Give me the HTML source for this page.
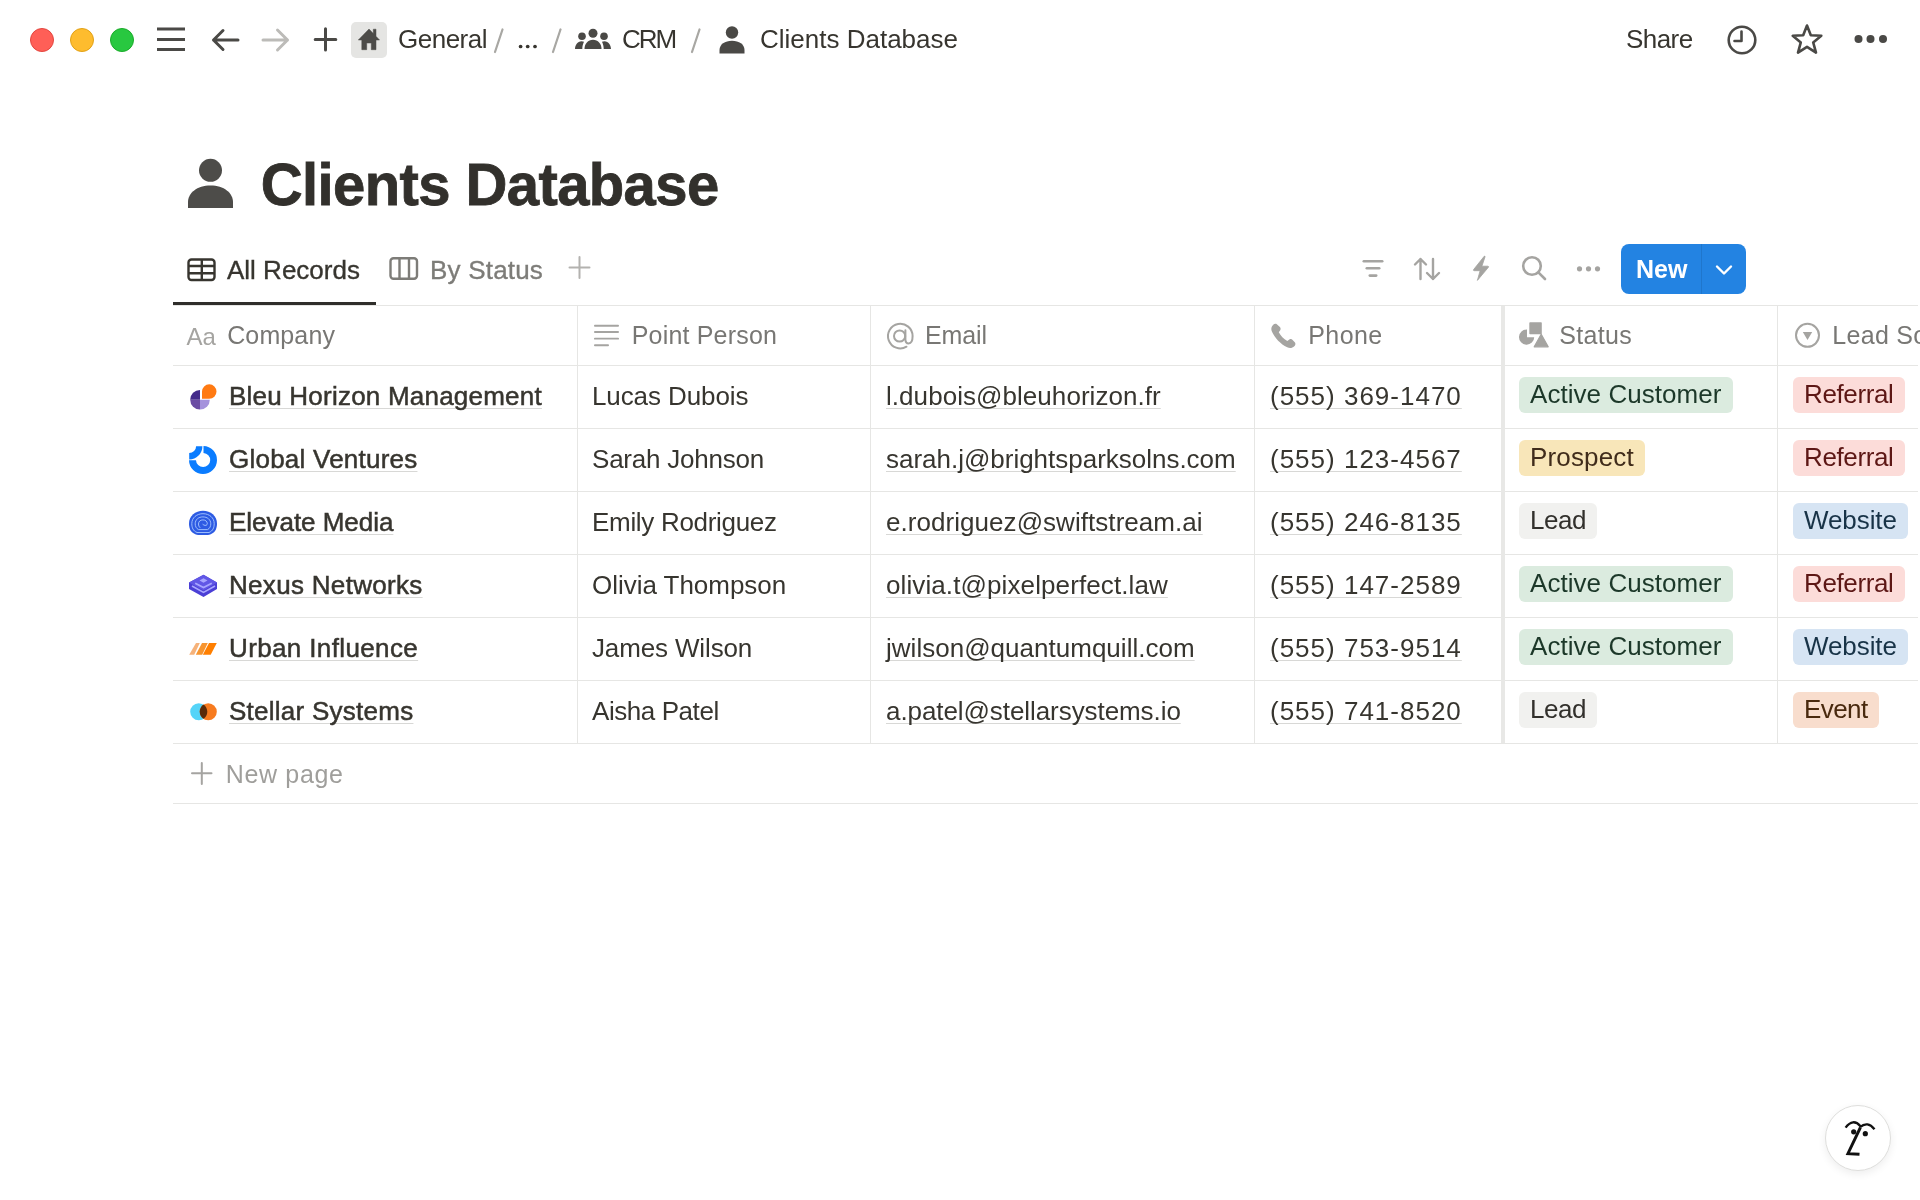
<!DOCTYPE html>
<html><head><meta charset="utf-8">
<style>
*{margin:0;padding:0;box-sizing:border-box}
html,body{width:1920px;height:1200px;overflow:hidden;background:#fff}
body{position:relative;font-family:"Liberation Sans",sans-serif;color:#37352f}
#root{position:absolute;left:0;top:0;width:1920px;height:1200px;will-change:transform}
.a{position:absolute}
.t{position:absolute;white-space:nowrap;line-height:30px;height:30px}
.f26{font-size:26px}
.f25{font-size:25px}
.hl{position:absolute;height:1px;background:#e6e6e4}
.vl{position:absolute;width:1px;background:#e6e6e4}
.hd{color:#787774}
.ul{text-decoration:underline;text-decoration-color:#d8d8d6;text-decoration-thickness:1px;text-underline-offset:3px;text-decoration-skip-ink:none}
.pill{position:absolute;height:35.7px;border-radius:6px;font-size:26px;line-height:35px;padding:0 11px;white-space:nowrap}
svg{position:absolute;overflow:visible}
</style></head><body><div id="root">

<!-- ===== TOP BAR ===== -->
<div class="a" style="left:30px;top:28px;width:24px;height:24px;border-radius:50%;background:#ff5f57;border:0.5px solid #e2463f"></div>
<div class="a" style="left:70px;top:28px;width:24px;height:24px;border-radius:50%;background:#febc2e;border:0.5px solid #e1a116"></div>
<div class="a" style="left:110px;top:28px;width:24px;height:24px;border-radius:50%;background:#28c840;border:0.5px solid #1aab29"></div>

<!-- hamburger -->
<svg style="left:157px;top:27px" width="28" height="25"><g fill="#4a4946"><rect x="0" y="0.5" width="28" height="3"/><rect x="0" y="11" width="28" height="3"/><rect x="0" y="21" width="28" height="3"/></g></svg>
<!-- back arrow -->
<svg style="left:210px;top:27px" width="32" height="26"><g fill="none" stroke="#4a4946" stroke-width="3" stroke-linecap="round" stroke-linejoin="round"><path d="M3.5 13H28M13 3.5L3.5 13L13 22.5"/></g></svg>
<!-- forward arrow -->
<svg style="left:260px;top:27px" width="32" height="26"><g fill="none" stroke="#bcbbb8" stroke-width="3" stroke-linecap="round" stroke-linejoin="round"><path d="M3 13H27.5M17.5 3L27.5 13L17.5 23"/></g></svg>
<!-- plus -->
<svg style="left:313px;top:27px" width="26" height="26"><g fill="none" stroke="#4a4946" stroke-width="3" stroke-linecap="round"><path d="M2.2 12.5H22.8M12.5 1.8V23"/></g></svg>
<!-- home -->
<div class="a" style="left:351px;top:22px;width:36px;height:36px;border-radius:5px;background:#e5e5e3"></div>
<svg style="left:357px;top:28px" width="24" height="24" viewBox="0 0 24 24"><path fill="#4d4c49" stroke="#4d4c49" stroke-width="0.5" stroke-linejoin="round" d="M12 1L16.3 5.5V1.2H19V8.3L22.5 12H19V21.7H14.3V15H9.7V21.7H4.8V12H1.3Z"/></svg>
<div class="t f26" style="left:398px;top:24px;letter-spacing:-0.5px">General</div>
<svg style="left:490px;top:26px" width="16" height="30"><path d="M12.5 3.5L5 26" stroke="#a8a7a3" stroke-width="2.2" stroke-linecap="round"/></svg>
<svg style="left:515px;top:40px" width="26" height="12"><g fill="#37352f"><circle cx="5.6" cy="6.5" r="1.85"/><circle cx="12.7" cy="6.5" r="1.85"/><circle cx="20" cy="6.5" r="1.85"/></g></svg>
<svg style="left:548px;top:26px" width="16" height="30"><path d="M12.5 3.5L5 26" stroke="#a8a7a3" stroke-width="2.2" stroke-linecap="round"/></svg>
<!-- group icon -->
<svg style="left:575px;top:28px" width="36" height="22" viewBox="0 0 36 22"><g fill="#4a4946"><circle cx="18" cy="5.2" r="4.5"/><circle cx="7" cy="8.2" r="3.8"/><circle cx="29" cy="8.2" r="3.8"/><path d="M9.5 21C9.5 15.8 13 11.8 18 11.8S26.5 15.8 26.5 21Z"/><path d="M0 21C0 17.3 2.5 13.2 6.5 13.2C7.5 13.2 8.3 13.4 9 13.7C7.9 15.8 7.3 18.3 7.3 21Z"/><path d="M36 21C36 17.3 33.5 13.2 29.5 13.2C28.5 13.2 27.7 13.4 27 13.7C28.1 15.8 28.7 18.3 28.7 21Z"/></g></svg>
<div class="t f26" style="left:622px;top:24px;letter-spacing:-2px">CRM</div>
<svg style="left:687px;top:26px" width="16" height="30"><path d="M12.5 3.5L5 26" stroke="#a8a7a3" stroke-width="2.2" stroke-linecap="round"/></svg>
<!-- person small -->
<svg style="left:719px;top:26px" width="26" height="28" viewBox="0 0 26 28"><g fill="#4a4946"><circle cx="13" cy="6.5" r="6.2"/><path d="M0.5 27.5V24C0.5 18.5 6 14.8 13 14.8S25.5 18.5 25.5 24V27.5Z"/></g></svg>
<div class="t f26" style="left:760px;top:24px">Clients Database</div>

<div class="t f26" style="left:1626px;top:24px;letter-spacing:-0.55px">Share</div>
<!-- clock -->
<svg style="left:1726px;top:24px" width="32" height="32" viewBox="0 0 32 32"><g fill="none" stroke="#4a4946" stroke-width="2.6" stroke-linecap="round" stroke-linejoin="round"><circle cx="16" cy="16" r="13.3"/><path d="M15.5 7.5V17H8.5"/></g></svg>
<!-- star -->
<svg style="left:1790px;top:23px" width="34" height="34" viewBox="0 0 34 34"><path fill="none" stroke="#4a4946" stroke-width="2.6" stroke-linejoin="round" d="M17 2.5L20.8 12.3L31.3 12.8L23.2 19.4L26 29.6L17 23.8L8 29.6L10.8 19.4L2.7 12.8L13.2 12.3Z"/></svg>
<!-- dots -->
<svg style="left:1854px;top:32px" width="36" height="16"><g fill="#4a4946"><circle cx="4.5" cy="7" r="4"/><circle cx="16.5" cy="7" r="4"/><circle cx="29" cy="7" r="4"/></g></svg>

<!-- ===== TITLE ===== -->
<svg style="left:187px;top:158px" width="48" height="51" viewBox="0 0 48 51"><g fill="#4d4c49"><circle cx="23.5" cy="12.3" r="11.5"/><path d="M1 50V44C1 35 10 27.5 23.5 27.5S46 35 46 44V50Z"/></g></svg>
<div class="a" style="left:260.8px;top:150px;font-size:58px;font-weight:bold;line-height:70px;white-space:nowrap;letter-spacing:-0.6px;transform:scaleY(1.035);transform-origin:0 55px;color:#32302c;-webkit-text-stroke:0.8px #32302c">Clients Database</div>

<!-- ===== TABS ===== -->
<svg style="left:187px;top:258px" width="30" height="24" viewBox="0 0 30 24"><g fill="none" stroke="#37352f" stroke-width="2.4"><rect x="1.5" y="1.5" width="26" height="20.5" rx="3"/><path d="M1.5 8H27.5M1.5 15.2H27.5M14.8 1.5V22"/></g></svg>
<div class="t f26" style="left:227px;top:255px;-webkit-text-stroke:0.35px #37352f">All Records</div>
<svg style="left:389px;top:257px" width="31" height="24" viewBox="0 0 31 24"><g fill="none" stroke="#7d7c78" stroke-width="2.4"><rect x="1.5" y="1.2" width="26.5" height="20.5" rx="3"/><path d="M10.5 1.2V21.7M20 1.2V21.7"/></g></svg>
<div class="t f26 hd" style="left:430px;top:255px;color:#7d7c78;letter-spacing:0.2px;-webkit-text-stroke:0.35px #7d7c78">By Status</div>
<svg style="left:568px;top:256px" width="24" height="24"><g fill="none" stroke="#b3b2af" stroke-width="2" stroke-linecap="round"><path d="M1.5 11.5H21.5M11.5 1V22"/></g></svg>
<div class="a" style="left:173px;top:302px;width:203px;height:3px;background:#2f2e2b"></div>

<!-- toolbar icons -->
<svg style="left:1362px;top:258px" width="24" height="20"><g fill="#a5a4a1"><rect x="0.5" y="2" width="21" height="2.6" rx="1.3"/><rect x="3.5" y="9" width="15" height="2.6" rx="1.3"/><rect x="6.5" y="16.3" width="9" height="2.6" rx="1.3"/></g></svg>
<svg style="left:1412px;top:256px" width="30" height="26"><g fill="none" stroke="#a5a4a1" stroke-width="2.4" stroke-linecap="round" stroke-linejoin="round"><path d="M8.5 23V3M3 8.5L8.5 3L14 8.5M21 3V23M15 17L21 23L27 17"/></g></svg>
<svg style="left:1465px;top:250px" width="30" height="36" viewBox="0 0 30 36"><path fill="#a5a4a1" stroke="#a5a4a1" stroke-width="0.8" stroke-linejoin="round" d="M19.2 6.3Q20.3 5.6 20 6.9L16.9 16.2H22.9Q24 16.4 23.4 17.3L12.4 30.4L15.1 20.7H9.2Q8 20.6 8.6 19.6Z"/></svg>
<svg style="left:1520px;top:254px" width="30" height="30"><g fill="none" stroke="#a5a4a1" stroke-width="2.6" stroke-linecap="round"><circle cx="12" cy="12" r="8.8"/><path d="M18.6 18.6L25 25"/></g></svg>
<svg style="left:1575px;top:264px" width="30" height="10"><g fill="#a5a4a1"><circle cx="4.5" cy="4.8" r="2.6"/><circle cx="13.5" cy="4.8" r="2.6"/><circle cx="22.5" cy="4.8" r="2.6"/></g></svg>
<!-- New button -->
<div class="a" style="left:1621px;top:244px;width:125px;height:50px;border-radius:8px;background:#2383e2"></div>
<div class="a" style="left:1701px;top:244px;width:1px;height:50px;background:#1f76cc"></div>
<div class="a" style="left:1636px;top:254px;font-size:25px;font-weight:bold;color:#fff;line-height:30px;white-space:nowrap">New</div>
<svg style="left:1715px;top:264px" width="18" height="12"><path fill="none" stroke="#fff" stroke-width="2.4" stroke-linecap="round" stroke-linejoin="round" d="M2 2.5L9 9.5L16 2.5"/></svg>

<!-- ===== TABLE ===== -->
<!--TABLE-->
<div class="hl" style="left:173px;top:305px;width:1745px"></div>
<div class="hl" style="left:173px;top:365px;width:1745px"></div>
<div class="hl" style="left:173px;top:428px;width:1745px"></div>
<div class="hl" style="left:173px;top:491px;width:1745px"></div>
<div class="hl" style="left:173px;top:554px;width:1745px"></div>
<div class="hl" style="left:173px;top:617px;width:1745px"></div>
<div class="hl" style="left:173px;top:680px;width:1745px"></div>
<div class="hl" style="left:173px;top:743px;width:1745px"></div>
<div class="hl" style="left:173px;top:803px;width:1745px"></div>
<div class="vl" style="left:577px;top:306px;height:437px"></div>
<div class="vl" style="left:870px;top:306px;height:437px"></div>
<div class="vl" style="left:1254px;top:306px;height:437px"></div>
<div class="vl" style="left:1777px;top:306px;height:437px"></div>
<div class="a" style="left:1501px;top:306px;width:3.5px;height:437px;background:#e8e8e6"></div>
<div class="t f25" style="left:186.5px;top:321.64px;color:#a5a4a1;font-size:24px">Aa</div>
<div class="t f25 hd" style="left:227.2px;top:320.34px;letter-spacing:0.12px">Company</div>
<svg style="left:593px;top:324px" width="28" height="24"><g fill="#a5a4a1"><rect x="1" y="0.8" width="25" height="1.9" rx=".9"/><rect x="1" y="7" width="25" height="1.9" rx=".9"/><rect x="1" y="13.7" width="25" height="1.9" rx=".9"/><rect x="1" y="20.3" width="15" height="1.9" rx=".9"/></g></svg>
<div class="t f25 hd" style="left:631.75px;top:320.34px;letter-spacing:0.18px">Point Person</div>
<svg style="left:884px;top:320px" width="32" height="32" viewBox="0 0 32 32"><g fill="none" stroke="#a5a4a1" stroke-width="2" stroke-linecap="round"><circle cx="15.6" cy="16" r="5.6"/><path d="M21.4 10.2V19.5Q21.6 23.5 24.6 23.5Q28.6 23.3 28.6 16A12.3 12.3 0 1 0 22.5 26.7"/></g></svg>
<div class="t f25 hd" style="left:925px;top:320.34px;letter-spacing:-0.13px">Email</div>
<svg style="left:1270px;top:322px" width="28" height="28" viewBox="0 0 28 28"><path fill="#a5a4a1" d="M6.8 2.2C5.5 1.5 4 2 3 3C1.2 4.7 0.8 7.2 2 9.8C4.8 16 10.5 22.2 17.2 25.3C19.8 26.5 22.4 26.1 24.3 24.2C25.4 23.1 25.8 21.6 25 20.4L22.6 17.9C21.8 17 20.4 16.8 19.4 17.5L17.3 19C13.7 17 10.6 13.8 8.8 10.3L10.2 8.2C10.9 7.2 10.7 5.9 9.9 5Z"/></svg>
<div class="t f25 hd" style="left:1308.2px;top:320.34px;letter-spacing:0.45px">Phone</div>
<svg style="left:1518px;top:321px" width="32" height="28" viewBox="0 0 32 28"><g fill="#a5a4a1"><rect x="11.3" y="1.3" width="12.5" height="12" rx="0.8"/><path d="M9 8.5A7.6 7.6 0 1 0 16.2 16.2H9Z"/><path d="M23.2 13.3L30.2 25.8H16.2Z" stroke="#a5a4a1" stroke-width="1.2" stroke-linejoin="round"/></g></svg>
<div class="t f25 hd" style="left:1559.2px;top:320.34px;letter-spacing:0.36px">Status</div>
<svg style="left:1793px;top:322px" width="28" height="28" viewBox="0 0 28 28"><circle cx="14.5" cy="13.3" r="11.5" fill="none" stroke="#a5a4a1" stroke-width="2"/><path fill="#a5a4a1" d="M9.8 10H19.2L14.5 18Z"/></svg>
<div class="t f25 hd" style="left:1832.3px;top:320.34px;letter-spacing:0.3px">Lead Source</div>
<svg style="left:185px;top:382px" width="36" height="32" viewBox="0 0 36 32"><path fill="#432b8a" d="M15 17.8V8A9.8 9.8 0 0 0 5.2 17.8Z"/><path fill="#6a4ba3" d="M15 17.8H5.2A9.8 9.8 0 0 0 15 27.6Z"/><path fill="#a592dc" d="M15 17.8V27.6A9.8 9.8 0 0 0 24.8 17.8Z"/><path fill="#ff7a12" d="M17 16.8V9.5A7.25 7.25 0 1 1 24.25 16.8Z"/></svg>
<div class="t f26" style="left:229px;top:380.99px;"><span class="ul" style="letter-spacing:0.22px;-webkit-text-stroke:0.5px #37352f">Bleu Horizon Management</span></div>
<div class="t f26" style="left:592px;top:380.99px;"><span style="letter-spacing:-0.1px">Lucas Dubois</span></div>
<div class="t f26" style="left:886px;top:380.99px;"><span class="ul" style="letter-spacing:0.054px">l.dubois@bleuhorizon.fr</span></div>
<div class="t f26" style="left:1270px;top:380.99px;"><span class="ul" style="letter-spacing:1px">(555) 369-1470</span></div>
<div class="pill" style="left:1519px;top:377px;width:213.5px;background:#dbebdf;color:#1c3829;letter-spacing:0.05px">Active Customer</div>
<div class="pill" style="left:1793px;top:377px;width:111.5px;background:#fcdcd9;color:#5d1715;letter-spacing:-0.37px">Referral</div>
<svg style="left:185px;top:445px" width="36" height="32" viewBox="0 0 36 32"><path fill="#0a7cff" d="M18.5 1A14 14 0 1 1 4 15.2H11A7.1 7.1 0 1 0 18.5 7.9Z"/><path fill="#0a7cff" d="M11.1 1.2H17.4A13.2 13.2 0 0 1 4.2 14.4V8.1A6.9 6.9 0 0 0 11.1 1.2Z"/></svg>
<div class="t f26" style="left:229px;top:443.99px;"><span class="ul" style="letter-spacing:0.23px;-webkit-text-stroke:0.5px #37352f">Global Ventures</span></div>
<div class="t f26" style="left:592px;top:443.99px;"><span style="letter-spacing:-0.216px">Sarah Johnson</span></div>
<div class="t f26" style="left:886px;top:443.99px;"><span class="ul" style="letter-spacing:-0.014px">sarah.j@brightsparksolns.com</span></div>
<div class="t f26" style="left:1270px;top:443.99px;"><span class="ul" style="letter-spacing:1px">(555) 123-4567</span></div>
<div class="pill" style="left:1519px;top:440px;width:125.8px;background:#f8e6b9;color:#402c1b;letter-spacing:0.15px">Prospect</div>
<div class="pill" style="left:1793px;top:440px;width:111.5px;background:#fcdcd9;color:#5d1715;letter-spacing:-0.37px">Referral</div>
<svg style="left:185px;top:508px" width="36" height="32" viewBox="0 0 36 32"><path fill="#2d5be3" d="M18 2.8C25.6 2.8 32 8 32 15.5C32 22 29.3 25.8 23 27H13C6.7 25.8 4 22 4 15.5C4 8 10.4 2.8 18 2.8Z"/><g fill="none" stroke="#a9c8ff" stroke-width="0.9"><path d="M12 24.5C8.2 23 6.8 19.8 6.8 15.6C6.8 9.8 11.6 5.7 18 5.7S29.2 9.8 29.2 15.6C29.2 19.8 27.8 23 24 24.5Z"/><path d="M13.5 21.6C11.2 20.5 10.2 18.2 10.2 15.8C10.2 11.5 13.6 8.9 17.9 8.9S25.8 11.5 25.8 15.8C25.8 18.2 24.8 20.5 22.5 21.6Z"/><path d="M15.2 19.8C14 18.8 13.5 17.4 13.5 16C13.5 13.4 15.4 11.9 17.9 11.9S22.3 13.4 22.3 15.6C22.3 17.2 20.6 18 18.8 17L17.6 16.2"/></g></svg>
<div class="t f26" style="left:229px;top:506.99px;"><span class="ul" style="letter-spacing:-0.03px;-webkit-text-stroke:0.5px #37352f">Elevate Media</span></div>
<div class="t f26" style="left:592px;top:506.99px;"><span style="letter-spacing:-0.305px">Emily Rodriguez</span></div>
<div class="t f26" style="left:886px;top:506.99px;"><span class="ul" style="letter-spacing:0.05px">e.rodriguez@swiftstream.ai</span></div>
<div class="t f26" style="left:1270px;top:506.99px;"><span class="ul" style="letter-spacing:1px">(555) 246-8135</span></div>
<div class="pill" style="left:1519px;top:503px;width:78px;background:#f1f1ef;color:#32302c;letter-spacing:-0.45px">Lead</div>
<div class="pill" style="left:1793px;top:503px;width:114.8px;background:#d6e4f3;color:#183347;letter-spacing:-0.09px">Website</div>
<svg style="left:185px;top:571px" width="36" height="32" viewBox="0 0 36 32"><path fill="#4b3fd6" d="M18.5 3.8L32 11.6V17.9L18.5 26L4 17.9V11.6Z"/><path fill="#6157e6" d="M18.5 3.8L32 11.6L18.5 19.5L4 11.6Z"/><g fill="none" stroke="#a9a7ff" stroke-width="1.7"><path d="M7 15L18.5 21.4L30 15"/><path d="M10.2 12.2L18.5 16.6L26.8 12.2"/></g><path fill="#a8a6ff" d="M18.5 7.2L22.5 9.5L18.5 11.8L14.5 9.5Z"/></svg>
<div class="t f26" style="left:229px;top:569.99px;"><span class="ul" style="letter-spacing:0.31px;-webkit-text-stroke:0.5px #37352f">Nexus Networks</span></div>
<div class="t f26" style="left:592px;top:569.99px;"><span style="letter-spacing:-0.03px">Olivia Thompson</span></div>
<div class="t f26" style="left:886px;top:569.99px;"><span class="ul" style="letter-spacing:0.103px">olivia.t@pixelperfect.law</span></div>
<div class="t f26" style="left:1270px;top:569.99px;"><span class="ul" style="letter-spacing:1px">(555) 147-2589</span></div>
<div class="pill" style="left:1519px;top:566px;width:213.5px;background:#dbebdf;color:#1c3829;letter-spacing:0.05px">Active Customer</div>
<div class="pill" style="left:1793px;top:566px;width:111.5px;background:#fcdcd9;color:#5d1715;letter-spacing:-0.37px">Referral</div>
<svg style="left:185px;top:634px" width="36" height="32" viewBox="0 0 36 32"><path fill="#f6b27a" d="M11 9H14.8L9.2 20.8H4.2Z"/><path fill="#f7952f" d="M17 9H22.8L17.2 20.8H10.8Z"/><path fill="#ff7f00" d="M24 9H31.8L25.7 20.8H17.8Z"/></svg>
<div class="t f26" style="left:229px;top:632.99px;"><span class="ul" style="letter-spacing:0.37px;-webkit-text-stroke:0.5px #37352f">Urban Influence</span></div>
<div class="t f26" style="left:592px;top:632.99px;"><span style="letter-spacing:-0.14px">James Wilson</span></div>
<div class="t f26" style="left:886px;top:632.99px;"><span class="ul" style="letter-spacing:0.019px">jwilson@quantumquill.com</span></div>
<div class="t f26" style="left:1270px;top:632.99px;"><span class="ul" style="letter-spacing:1px">(555) 753-9514</span></div>
<div class="pill" style="left:1519px;top:629px;width:213.5px;background:#dbebdf;color:#1c3829;letter-spacing:0.05px">Active Customer</div>
<div class="pill" style="left:1793px;top:629px;width:114.8px;background:#d6e4f3;color:#183347;letter-spacing:-0.09px">Website</div>
<svg style="left:185px;top:697px" width="36" height="32" viewBox="0 0 36 32"><circle cx="13.75" cy="14.7" r="8.55" fill="#55d4f8"/><circle cx="23.25" cy="14.7" r="8.55" fill="#f77b1f"/><path fill="#5a2a08" d="M18.5 7.6A8.55 8.55 0 0 1 18.5 21.8A8.55 8.55 0 0 1 18.5 7.6Z"/></svg>
<div class="t f26" style="left:229px;top:695.99px;"><span class="ul" style="letter-spacing:0.255px;-webkit-text-stroke:0.5px #37352f">Stellar Systems</span></div>
<div class="t f26" style="left:592px;top:695.99px;"><span style="letter-spacing:-0.43px">Aisha Patel</span></div>
<div class="t f26" style="left:886px;top:695.99px;"><span class="ul" style="letter-spacing:-0.074px">a.patel@stellarsystems.io</span></div>
<div class="t f26" style="left:1270px;top:695.99px;"><span class="ul" style="letter-spacing:1px">(555) 741-8520</span></div>
<div class="pill" style="left:1519px;top:692px;width:78px;background:#f1f1ef;color:#32302c;letter-spacing:-0.45px">Lead</div>
<div class="pill" style="left:1793px;top:692px;width:85.5px;background:#f8ddcd;color:#49290e;letter-spacing:-0.59px">Event</div>
<svg style="left:190px;top:761px" width="24" height="25"><g fill="none" stroke="#a5a4a1" stroke-width="2" stroke-linecap="round"><path d="M2 12.3H21.5M11.8 2V23"/></g></svg>
<div class="t f25" style="left:225.7px;top:759.34px;color:#9f9e9b;letter-spacing:0.67px">New page</div>
<div class="a" style="left:1825px;top:1105px;width:66px;height:66px;border-radius:50%;background:#fff;border:1.5px solid #dededc;box-shadow:0 3px 9px rgba(0,0,0,0.07)"></div>
<svg style="left:1825px;top:1105px" width="66" height="66" viewBox="0 0 66 66"><g fill="none" stroke="#111" stroke-width="2.4" stroke-linecap="butt"><path d="M20.6 22.6Q28 12.8 35.5 21.2"/><path d="M35 22.2Q42.5 15.6 49.5 24.2"/></g><path d="M35.4 22.5L22.9 48.6L34.5 49.3" fill="none" stroke="#111" stroke-width="2.9"/><circle cx="28.7" cy="26.8" r="2.6" fill="#111"/><circle cx="40.3" cy="28.7" r="2.6" fill="#111"/></svg>
<!--/TABLE-->
</div></body></html>
